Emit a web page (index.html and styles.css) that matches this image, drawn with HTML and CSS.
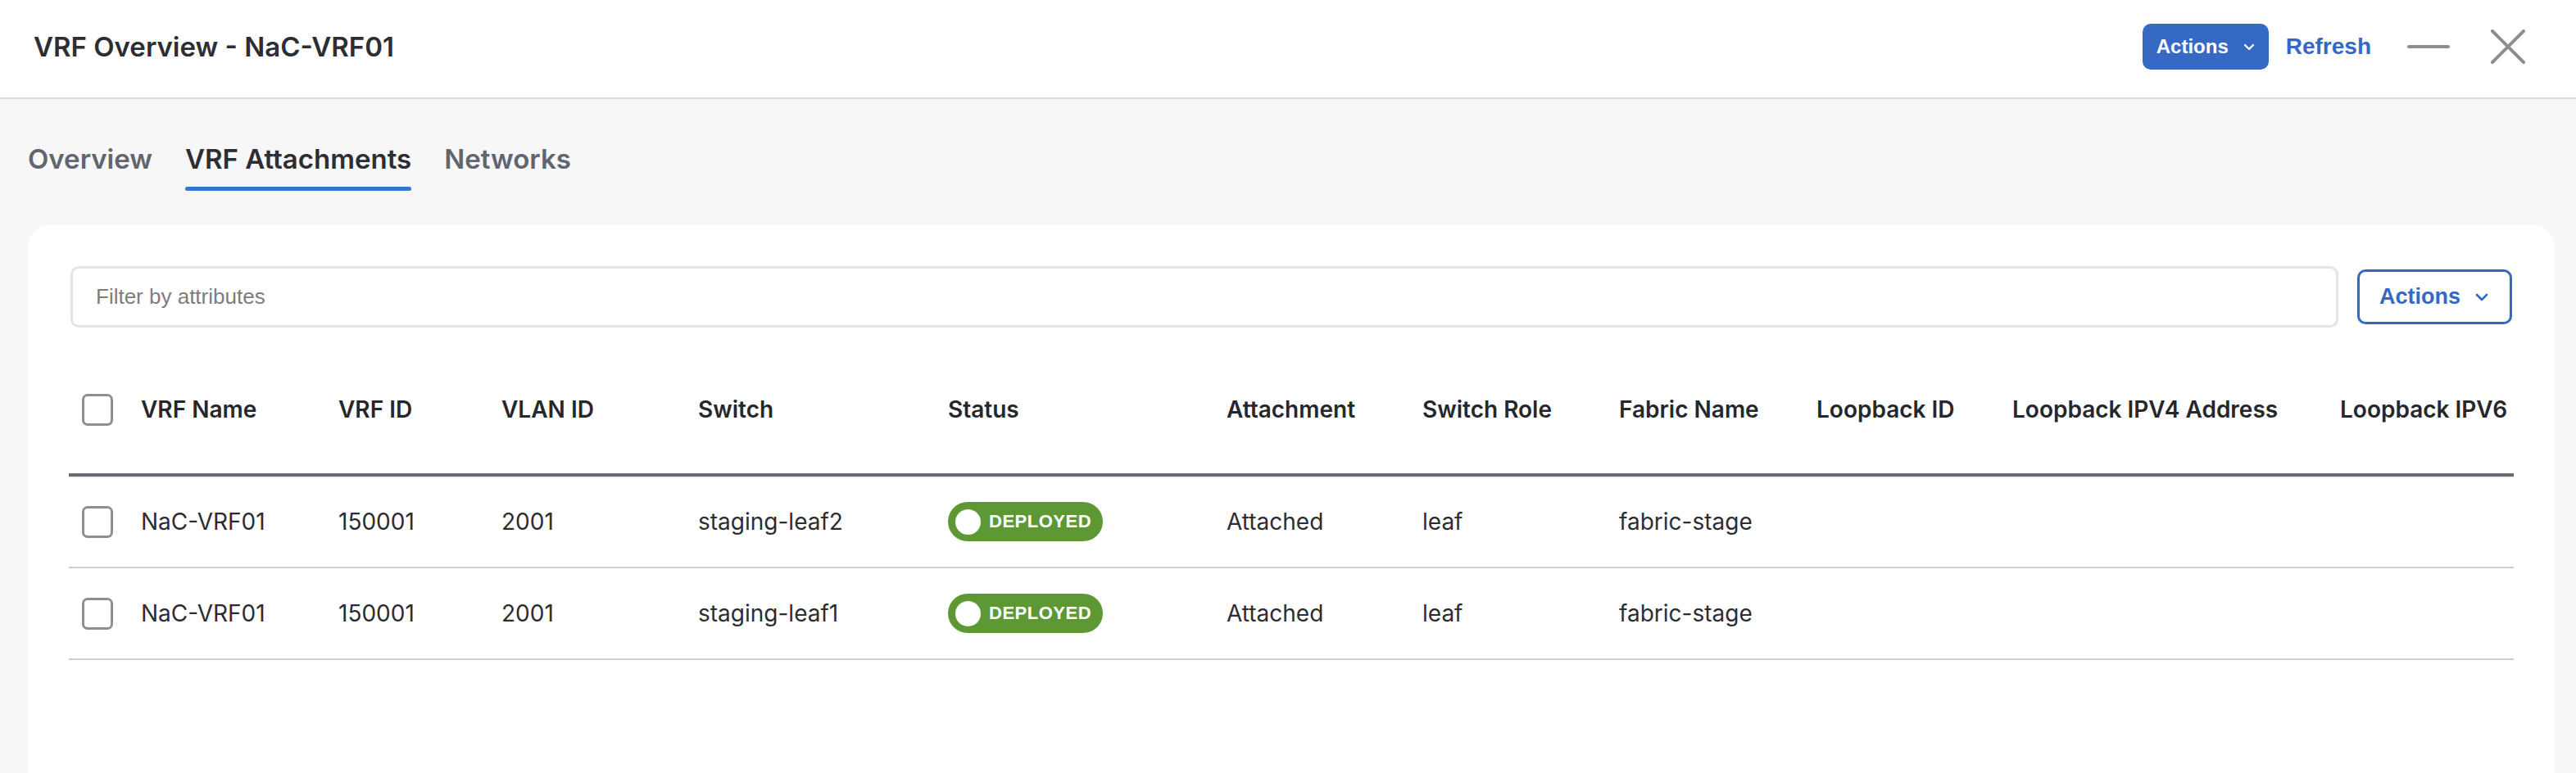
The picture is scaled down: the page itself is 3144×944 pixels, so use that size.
FILE: index.html
```html
<!DOCTYPE html>
<html lang="en">
<head>
    <meta charset="UTF-8">
    <meta name="viewport" content="width=device-width, initial-scale=1.0">
    <title>VRF Overview - NaC-VRF01</title>
    <link rel="stylesheet" href="styles.css">
</head>
<body>
    <div class="panel-header">
        <h1 class="panel-title">VRF Overview - NaC-VRF01</h1>
        <div class="header-actions">
            <button class="btn btn-primary">
                Actions
                <svg class="chevron" width="14" height="9" viewBox="0 0 14 9"><path d="M2 2 L7 7 L12 2" fill="none" stroke="currentColor" stroke-width="2.4" stroke-linecap="round" stroke-linejoin="round"/></svg>
            </button>
            <button class="link-btn">Refresh</button>
            <button class="icon-btn minimize" aria-label="Minimize">
                <svg width="52" height="8" viewBox="0 0 52 8"><path d="M2 4 H50" stroke="#8e8e8e" stroke-width="4" stroke-linecap="round"/></svg>
            </button>
            <button class="icon-btn close" aria-label="Close">
                <svg width="42" height="42" viewBox="0 0 42 42"><path d="M2 2 L40 40 M40 2 L2 40" stroke="#8e8e8e" stroke-width="4" stroke-linecap="round"/></svg>
            </button>
        </div>
    </div>

    <div class="content">
        <nav class="tabs">
            <div class="tab">Overview</div>
            <div class="tab active">VRF Attachments</div>
            <div class="tab">Networks</div>
        </nav>

        <div class="card">
            <div class="filter-row">
                <input class="filter-input" type="text" placeholder="Filter by attributes">
                <button class="btn btn-outline">
                    Actions
                    <svg class="chevron" width="16" height="10" viewBox="0 0 16 10"><path d="M2 2 L8 8 L14 2" fill="none" stroke="currentColor" stroke-width="2.6" stroke-linecap="round" stroke-linejoin="round"/></svg>
                </button>
            </div>

            <div class="tbl">
                <div class="tbl-row tbl-head">
                    <div class="cell"><span class="checkbox"></span></div>
                    <div class="cell">VRF Name</div>
                    <div class="cell">VRF ID</div>
                    <div class="cell">VLAN ID</div>
                    <div class="cell">Switch</div>
                    <div class="cell">Status</div>
                    <div class="cell">Attachment</div>
                    <div class="cell">Switch Role</div>
                    <div class="cell">Fabric Name</div>
                    <div class="cell">Loopback ID</div>
                    <div class="cell">Loopback IPV4 Address</div>
                    <div class="cell">Loopback IPV6</div>
                </div>

                <div class="tbl-row tbl-body">
                    <div class="cell"><span class="checkbox"></span></div>
                    <div class="cell">NaC-VRF01</div>
                    <div class="cell">150001</div>
                    <div class="cell">2001</div>
                    <div class="cell">staging-leaf2</div>
                    <div class="cell"><span class="badge"><span class="badge-dot"></span>DEPLOYED</span></div>
                    <div class="cell">Attached</div>
                    <div class="cell">leaf</div>
                    <div class="cell">fabric-stage</div>
                    <div class="cell"></div>
                    <div class="cell"></div>
                    <div class="cell"></div>
                </div>

                <div class="tbl-row tbl-body">
                    <div class="cell"><span class="checkbox"></span></div>
                    <div class="cell">NaC-VRF01</div>
                    <div class="cell">150001</div>
                    <div class="cell">2001</div>
                    <div class="cell">staging-leaf1</div>
                    <div class="cell"><span class="badge"><span class="badge-dot"></span>DEPLOYED</span></div>
                    <div class="cell">Attached</div>
                    <div class="cell">leaf</div>
                    <div class="cell">fabric-stage</div>
                    <div class="cell"></div>
                    <div class="cell"></div>
                    <div class="cell"></div>
                </div>
            </div>
        </div>
    </div>
</body>
</html>
```

FILE: styles.css
```css
* {
    box-sizing: border-box;
}

body {
    margin: 0;
    height: 944px;
    overflow: hidden;
    font-family: 'Inter', 'Noto Sans', sans-serif;
    background: #f7f7f7;
    color: #2b2d31;
}

button {
    font-family: 'Liberation Sans', Arial, sans-serif;
    cursor: pointer;
}

.panel-header {
    display: flex;
    align-items: center;
    justify-content: space-between;
    height: 121px;
    padding: 0 62px 5px 41px;
    background: #fff;
    border-bottom: 2px solid #dcdcdc;
}

.panel-title {
    margin: 0;
    font-size: 33px;
    font-weight: 600;
    color: #2c2e33;
}

.header-actions {
    display: flex;
    align-items: center;
}

.btn {
    display: inline-flex;
    align-items: center;
    border-radius: 10px;
    font-weight: bold;
}

.btn-primary {
    height: 56px;
    width: 154px;
    padding: 0 0 0 17px;
    gap: 18px;
    border: none;
    background: #3669c4;
    color: #fff;
    font-size: 24px;
}

.link-btn {
    margin-left: 21px;
    padding: 0;
    border: none;
    background: none;
    color: #3467c6;
    font-size: 28px;
    font-weight: bold;
}

.icon-btn {
    display: flex;
    padding: 0;
    border: none;
    background: none;
}

.minimize {
    margin-left: 44px;
}

.close {
    margin-left: 50px;
}

.content {
    padding: 0 26px 0 34px;
}

.tabs {
    display: flex;
    gap: 40px;
    padding-top: 53px;
}

.tab {
    font-size: 33px;
    font-weight: 600;
    line-height: 40px;
    color: #5f6571;
}

.tab::after {
    content: "";
    display: block;
    height: 5px;
    margin-top: 14px;
    border-radius: 3px;
}

.tab.active {
    color: #2c2e33;
}

.tab.active::after {
    background: #3574d0;
}

.card {
    margin-top: 42px;
    height: 700px;
    padding: 50px 50px 0;
    background: #fff;
    border-radius: 26px 26px 0 0;
}

.filter-row {
    display: flex;
    align-items: center;
    gap: 23px;
}

.filter-input {
    flex: 1;
    height: 75px;
    margin-left: 2px;
    padding: 0 28px;
    border: 3px solid #e3e4e8;
    border-radius: 10px;
    font-family: 'Liberation Sans', Arial, sans-serif;
    font-size: 26px;
    color: #333;
    outline: none;
}

.filter-input::placeholder {
    color: #7d7d7d;
}

.btn-outline {
    height: 67px;
    width: 189px;
    margin-right: 2px;
    padding: 0 0 0 24px;
    gap: 18px;
    border: 3px solid #3467c6;
    background: #fff;
    color: #3467c6;
    font-size: 27px;
}

.tbl {
    margin-top: 22px;
}

.tbl-row {
    display: grid;
    grid-template-columns: 72px 241px 199px 240px 305px 340px 239px 240px 241px 239px 400px 1fr;
    align-items: center;
    font-size: 28px;
}

.tbl-head {
    height: 160px;
    border-bottom: 4px solid #646b73;
    box-shadow: 0 2px 0 #f0f0f0;
    font-weight: 600;
    color: #25272b;
}

.tbl-body {
    height: 112px;
    border-bottom: 2px solid #d0d0d0;
}

.cell {
    display: flex;
    align-items: center;
    padding-left: 16px;
    white-space: nowrap;
    overflow: hidden;
}

.checkbox {
    display: block;
    width: 38px;
    height: 39px;
    border: 3px solid #8b9097;
    border-radius: 7px;
    background: #fff;
}

.badge {
    display: inline-flex;
    align-items: center;
    gap: 10px;
    height: 48px;
    padding: 0 14px 0 9px;
    border-radius: 24px;
    background: #5e9834;
    color: #fff;
    font-family: 'Liberation Sans', Arial, sans-serif;
    font-size: 22px;
    font-weight: bold;
    letter-spacing: 0.5px;
}

.badge-dot {
    width: 31px;
    height: 31px;
    border-radius: 50%;
    background: #fff;
}
```
